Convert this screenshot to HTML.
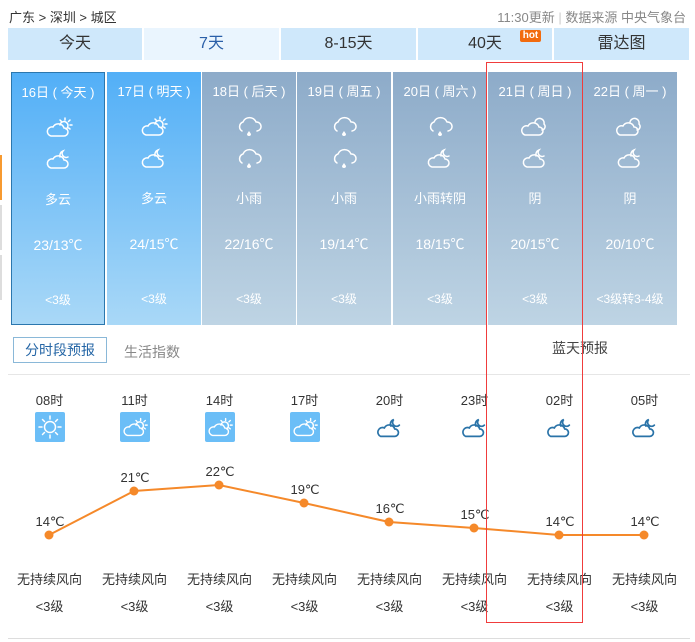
<!DOCTYPE html>
<html><head><meta charset="utf-8"><style>
*{margin:0;padding:0;box-sizing:border-box}
body{width:695px;height:642px;background:#fff;position:relative;overflow:hidden;font-family:"Liberation Sans","Noto Sans CJK SC",sans-serif;}
.a{position:absolute}
.tab{position:absolute;top:28px;height:32px;background:#cfe8fb;color:#333;font-size:16px;text-align:center;line-height:32px}
.card{position:absolute;top:72px;height:253px;width:94px;color:#fff;text-align:center}
.blue{background:linear-gradient(#52aff7,#a9d8f7)}
.grey{background:linear-gradient(#8dabc9,#bed4e4)}
.card div{position:absolute;left:0;width:100%;font-size:13px}
.card svg{position:absolute;left:31px}
.col{position:absolute;width:85px;text-align:center;color:#333;font-size:13px}
</style></head><body>
<svg width="0" height="0" style="position:absolute">
<defs>
<symbol id="cs" viewBox="0 0 32 24"><g fill="none" stroke="#fff" stroke-width="1.5" stroke-linecap="round"><path d="M8 21h13a4 4 0 0 0 0-8 6 6 0 0 0-11-1 4.5 4.5 0 0 0-2 9z"/><path d="M17 10a4 4 0 1 1 6 4"/><path d="M22 3v2M27 5l-1.5 1.5M29 10h-2M17 5l1.2 1.2M27 14l-1.3-1"/></g></symbol>
<symbol id="cm" viewBox="0 0 32 24"><g fill="none" stroke="#fff" stroke-width="1.5" stroke-linecap="round"><path d="M8 21h13a4 4 0 0 0 0-8 6 6 0 0 0-11-1 4.5 4.5 0 0 0-2 9z"/><path d="M17 10a5 5 0 0 1 3-6 4 4 0 0 0 5 6"/></g></symbol>
<symbol id="cr" viewBox="0 0 32 24"><g fill="none" stroke="#fff" stroke-width="1.5" stroke-linecap="round"><path d="M9 17a5 5 0 0 1 1-9 7 7 0 0 1 13 0 4.5 4.5 0 0 1 1 9"/></g><path d="M16 17l-2 3a2 2 0 0 0 4 0z" fill="#fff"/></symbol>
<symbol id="cc" viewBox="0 0 32 24"><g fill="none" stroke="#fff" stroke-width="1.5" stroke-linecap="round"><path d="M6 21h14a4 4 0 0 0 0-8 6 6 0 0 0-11-1 4.5 4.5 0 0 0-3 9z"/><path d="M16 8a4.5 4.5 0 0 1 9 2 3.5 3.5 0 0 1-2 6"/></g></symbol>
<symbol id="hm" viewBox="0 0 32 24"><g fill="none" stroke="#2a73a8" stroke-width="1.8" stroke-linecap="round"><path d="M6 22h15a4 4 0 0 0 0-8 6 6 0 0 0-11-1 4.5 4.5 0 0 0-4 9z"/><path d="M17 11a5 5 0 0 1 3-7 4 4 0 0 0 6 6"/></g></symbol>
</defs></svg>
<div class="a" style="left:9px;top:7px;font-size:13px;color:#333">广东 &gt; 深圳 &gt; 城区</div>
<div class="a" style="right:9px;top:7px;font-size:13px;color:#888">11:30更新 <span style="color:#ccc">|</span> 数据来源 中央气象台</div>
<div class="tab" style="left:8px;width:134px">今天</div>
<div class="tab" style="left:144px;width:135px;background:#eaf5fe;color:#2a5fa8">7天</div>
<div class="tab" style="left:281px;width:135px">8-15天</div>
<div class="tab" style="left:418px;width:134px">40天</div>
<div class="a" style="left:520px;top:30px;width:21px;height:12px;background:#f26b0f;color:#fff;font-size:10px;font-weight:bold;line-height:12px;text-align:center;border-radius:2px">hot</div>
<div class="tab" style="left:554px;width:135px">雷达图</div>
<div class="a" style="left:0;top:155px;width:2px;height:45px;background:#f79a30"></div>
<div class="a" style="left:0;top:205px;width:2px;height:45px;background:#ddd"></div>
<div class="a" style="left:0;top:255px;width:2px;height:45px;background:#ddd"></div>

<div class="card blue" style="left:11px;border:1px solid #2b77ae"><div style="top:9px">16日 ( 今天 )</div><svg width="32" height="24" style="top:42px"><use href="#cs"/></svg><svg width="32" height="24" style="top:74px"><use href="#cm"/></svg><div style="top:116px">多云</div><div style="top:162px;font-size:14px">23/13℃</div><div style="top:218px;font-size:12px">&lt;3级</div></div>
<div class="card blue" style="left:107px"><div style="top:9px">17日 ( 明天 )</div><svg width="32" height="24" style="top:42px"><use href="#cs"/></svg><svg width="32" height="24" style="top:74px"><use href="#cm"/></svg><div style="top:116px">多云</div><div style="top:162px;font-size:14px">24/15℃</div><div style="top:218px;font-size:12px">&lt;3级</div></div>
<div class="card grey" style="left:202px"><div style="top:9px">18日 ( 后天 )</div><svg width="32" height="24" style="top:42px"><use href="#cr"/></svg><svg width="32" height="24" style="top:74px"><use href="#cr"/></svg><div style="top:116px">小雨</div><div style="top:162px;font-size:14px">22/16℃</div><div style="top:218px;font-size:12px">&lt;3级</div></div>
<div class="card grey" style="left:297px"><div style="top:9px">19日 ( 周五 )</div><svg width="32" height="24" style="top:42px"><use href="#cr"/></svg><svg width="32" height="24" style="top:74px"><use href="#cr"/></svg><div style="top:116px">小雨</div><div style="top:162px;font-size:14px">19/14℃</div><div style="top:218px;font-size:12px">&lt;3级</div></div>
<div class="card grey" style="left:393px"><div style="top:9px">20日 ( 周六 )</div><svg width="32" height="24" style="top:42px"><use href="#cr"/></svg><svg width="32" height="24" style="top:74px"><use href="#cm"/></svg><div style="top:116px">小雨转阴</div><div style="top:162px;font-size:14px">18/15℃</div><div style="top:218px;font-size:12px">&lt;3级</div></div>
<div class="card grey" style="left:488px"><div style="top:9px">21日 ( 周日 )</div><svg width="32" height="24" style="top:42px"><use href="#cc"/></svg><svg width="32" height="24" style="top:74px"><use href="#cm"/></svg><div style="top:116px">阴</div><div style="top:162px;font-size:14px">20/15℃</div><div style="top:218px;font-size:12px">&lt;3级</div></div>
<div class="card grey" style="left:583px"><div style="top:9px">22日 ( 周一 )</div><svg width="32" height="24" style="top:42px"><use href="#cc"/></svg><svg width="32" height="24" style="top:74px"><use href="#cm"/></svg><div style="top:116px">阴</div><div style="top:162px;font-size:14px">20/10℃</div><div style="top:218px;font-size:12px">&lt;3级转3-4级</div></div>

<div class="a" style="left:13px;top:337px;width:94px;height:26px;border:1px solid #8ab8d8;color:#2566a6;font-size:14px;text-align:center;line-height:24px">分时段预报</div>
<div class="a" style="left:124px;top:342px;font-size:14px;color:#888">生活指数</div>
<div class="a" style="left:552px;top:338px;font-size:14px;color:#444">蓝天预报</div>
<div class="a" style="left:8px;top:374px;width:682px;height:1px;background:#e6e6e6"></div>

<div class="col" style="left:7px;top:390px">08时</div><div class="col" style="left:92px;top:390px">11时</div><div class="col" style="left:177px;top:390px">14时</div><div class="col" style="left:262px;top:390px">17时</div><div class="col" style="left:347px;top:390px">20时</div><div class="col" style="left:432px;top:390px">23时</div><div class="col" style="left:517px;top:390px">02时</div><div class="col" style="left:602px;top:390px">05时</div>

<svg class="a" style="left:0;top:410px" width="695" height="40">
<g transform="translate(35,2)"><rect width="30" height="30" rx="2" fill="#6bbef7"/><g stroke="#fff" stroke-width="1.5" fill="none" stroke-linecap="round"><circle cx="15" cy="15" r="5.5"/><path d="M15 4v3M15 23v3M4 15h3M23 15h3M7.5 7.5l2 2M20.5 20.5l2 2M22.5 7.5l-2 2M9.5 20.5l-2 2"/></g></g>
<g transform="translate(120,2)"><rect width="30" height="30" rx="2" fill="#6bbef7"/><svg x="0" y="3" width="30" height="24" viewBox="0 0 32 24"><use href="#cs"/></svg></g>
<g transform="translate(205,2)"><rect width="30" height="30" rx="2" fill="#6bbef7"/><svg x="0" y="3" width="30" height="24" viewBox="0 0 32 24"><use href="#cs"/></svg></g>
<g transform="translate(290,2)"><rect width="30" height="30" rx="2" fill="#6bbef7"/><svg x="0" y="3" width="30" height="24" viewBox="0 0 32 24"><use href="#cs"/></svg></g>
<svg x="375" y="4" width="30" height="26" viewBox="0 0 32 24"><use href="#hm"/></svg>
<svg x="460" y="4" width="30" height="26" viewBox="0 0 32 24"><use href="#hm"/></svg>
<svg x="545" y="4" width="30" height="26" viewBox="0 0 32 24"><use href="#hm"/></svg>
<svg x="630" y="4" width="30" height="26" viewBox="0 0 32 24"><use href="#hm"/></svg>
</svg>

<svg class="a" style="left:0;top:455px" width="695" height="100" font-family="Liberation Sans,sans-serif" font-size="13" fill="#333" text-anchor="middle">
<polyline points="49,80 134,36 219,30 304,48 389,67 474,73 559,80 644,80" fill="none" stroke="#f5892a" stroke-width="2"/>
<g fill="#f5892a"><circle cx="49" cy="80" r="4.5"/><circle cx="134" cy="36" r="4.5"/><circle cx="219" cy="30" r="4.5"/><circle cx="304" cy="48" r="4.5"/><circle cx="389" cy="67" r="4.5"/><circle cx="474" cy="73" r="4.5"/><circle cx="559" cy="80" r="4.5"/><circle cx="644" cy="80" r="4.5"/></g>
<text x="50" y="71">14℃</text><text x="135" y="27">21℃</text><text x="220" y="21">22℃</text><text x="305" y="39">19℃</text><text x="390" y="58">16℃</text><text x="475" y="64">15℃</text><text x="560" y="71">14℃</text><text x="645" y="71">14℃</text>
</svg>

<div class="col" style="left:7px;top:569px">无持续风向</div><div class="col" style="left:92px;top:569px">无持续风向</div><div class="col" style="left:177px;top:569px">无持续风向</div><div class="col" style="left:262px;top:569px">无持续风向</div><div class="col" style="left:347px;top:569px">无持续风向</div><div class="col" style="left:432px;top:569px">无持续风向</div><div class="col" style="left:517px;top:569px">无持续风向</div><div class="col" style="left:602px;top:569px">无持续风向</div>
<div class="col" style="left:7px;top:596px">&lt;3级</div><div class="col" style="left:92px;top:596px">&lt;3级</div><div class="col" style="left:177px;top:596px">&lt;3级</div><div class="col" style="left:262px;top:596px">&lt;3级</div><div class="col" style="left:347px;top:596px">&lt;3级</div><div class="col" style="left:432px;top:596px">&lt;3级</div><div class="col" style="left:517px;top:596px">&lt;3级</div><div class="col" style="left:602px;top:596px">&lt;3级</div>
<div class="a" style="left:8px;top:638px;width:682px;height:1px;background:#ddd"></div>
<div class="a" style="left:486px;top:62px;width:97px;height:561px;border:1px solid #f03c3c"></div>
</body></html>
